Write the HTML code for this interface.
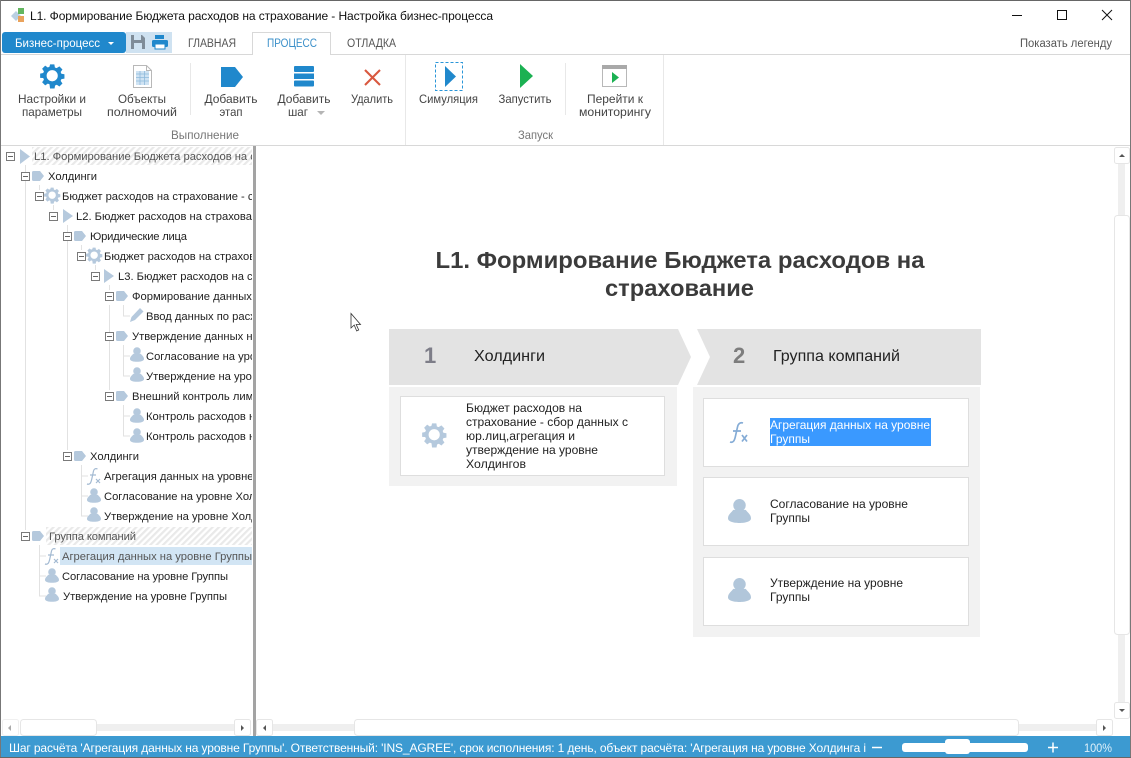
<!DOCTYPE html>
<html><head><meta charset="utf-8"><style>
html,body{margin:0;padding:0;background:#fff;width:1131px;height:758px;overflow:hidden}
svg{display:block}
text{font-family:"Liberation Sans","DejaVu Sans",sans-serif;white-space:pre}
.t{font-size:11.2px;fill:#222}
.r{font-size:12px;fill:#444;text-anchor:middle}
.c{font-size:12px;fill:#222}
</style></head><body>
<svg width="1131" height="758" viewBox="0 0 1131 758" xmlns="http://www.w3.org/2000/svg">
<defs>
<pattern id="h" width="4.500" height="4.500" patternUnits="userSpaceOnUse" patternTransform="rotate(-45)"><rect width="4.500" height="4.500" fill="#fff"/><rect width="4.500" height="2.200" fill="#e9e9e9"/></pattern>
<clipPath id="tc"><rect x="0" y="146" width="252" height="570"/></clipPath>
<symbol id="tag" viewBox="0 0 12 10" overflow="visible"><path d="M1.500 0H8L12 5 8 10H1.500Q0 10 0 8.500V1.500Q0 0 1.500 0Z"/></symbol>
<symbol id="play" viewBox="0 0 10 16" overflow="visible" preserveAspectRatio="none"><path d="M0 0 10 8 0 16Z"/></symbol>
<symbol id="gear" viewBox="0 0 24 24" overflow="visible"><path fill-rule="evenodd" d="M9.600 0h4.800l.6 3.400 1.900.8L20 2.200l3.400 3.400-2 2.900.8 1.900 3.400.6v4.800l-3.400.6-.8 1.900 2 2.900-3.400 3.400-2.900-2-1.900.8-.6 3.400H9.600L9 22.100l-1.900-.8-2.900 2-3.400-3.400 2-2.900-.8-1.900L-1.400 15v-4.800l3.400-.6.8-1.900-2-2.900L4.200 1.400l2.900 2L9 2.600Z M12 6.400a6.200 6.200 0 1 0 0 12.400 6.200 6.200 0 0 0 0-12.400Z" transform="translate(1.400 -.6) scale(.9)"/></symbol>
<symbol id="p" viewBox="0 0 14 14.600" overflow="visible"><circle cx="7" cy="3.800" r="3.800"/><path d="M0 11.800C0 9.400 2 8.300 3.200 6.600H10.800C12 8.300 14 9.400 14 11.800 14 13.800 10.500 14.600 7 14.600S0 13.800 0 11.800Z"/></symbol>
</defs>

<rect width="1131" height="758" fill="#fff"/>
<!-- title bar -->
<g>
<path d="M11 16l5-5 5 5-5 5Z" fill="#b9cfe2"/><rect x="18" y="8" width="6" height="6" fill="#63b65f"/><rect x="18" y="16" width="6" height="6" fill="#eaa35c"/>
<text x="30" y="20" font-size="12" fill="#111" textLength="463">L1. Формирование Бюджета расходов на страхование - Настройка бизнес-процесса</text>
<path d="M1012 15.500h10" stroke="#111"/><rect x="1057.500" y="10.500" width="9" height="9" fill="none" stroke="#111"/><path d="M1102 10l10 10M1112 10l-10 10" stroke="#111" fill="none"/>
</g>
<!-- tabs row -->
<rect x="126" y="32" width="46" height="21" fill="#cfe2f1"/>
<rect x="2" y="32" width="124" height="21" rx="3" fill="#2088cc"/>
<text x="15" y="47" font-size="11.500" fill="#fff" textLength="85">Бизнес-процесс</text>
<path d="M108 42h6l-3 3Z" fill="#fff"/>
<path d="M131 35h11l3 3v11h-14Z" fill="#7f8c98"/><rect x="134" y="35" width="7" height="5" fill="#cfe2f1"/><rect x="134" y="43" width="8" height="6" fill="#cfe2f1"/>
<path d="M155 35h9v4h-9Z" fill="#2088cc"/><rect x="152" y="40" width="16" height="7" rx="1.500" fill="#2088cc"/><rect x="155" y="44" width="10" height="5" fill="#fff" stroke="#2088cc"/>
<text x="188" y="47" font-size="11.500" fill="#555" textLength="48" lengthAdjust="spacingAndGlyphs">ГЛАВНАЯ</text>
<path d="M0 54.500H252.500V32.500H330.500V54.500H1131" fill="none" stroke="#d8d8d8"/>
<text x="267" y="47" font-size="11.500" fill="#3a8fc9" textLength="50" lengthAdjust="spacingAndGlyphs">ПРОЦЕСС</text>
<text x="347" y="47" font-size="11.500" fill="#555" textLength="49" lengthAdjust="spacingAndGlyphs">ОТЛАДКА</text>
<text x="1020" y="47" font-size="11.500" fill="#555" textLength="92" lengthAdjust="spacingAndGlyphs">Показать легенду</text>

<!-- ribbon icons -->
<use href="#gear" x="40" y="65" width="24" height="24" fill="#2088cc"/>
<g fill="none" stroke="#b8b8b8"><path d="M133.500 65.500h13l5 5v17h-18Z" fill="#fff"/><path d="M146.500 65.500v5h5"/></g>
<g fill="#cfe3f3"><rect x="136" y="71" width="13" height="14"/></g><g stroke="#8fbadb" stroke-width=".8"><path d="M136 74h13M136 77.500h13M136 81h13M140 71v14M144.500 71v14"/></g>
<path d="M221 67H235L243 77 235 87H221Z" fill="#2088cc"/>
<rect x="294" y="66" width="20" height="6" rx="1" fill="#2088cc"/><rect x="294" y="73.500" width="20" height="5.500" fill="#2088cc"/><rect x="294" y="80.500" width="20" height="6" rx="1" fill="#2088cc"/>
<path d="M365 70l15 15M380 70l-15 15" stroke="#d9583f" stroke-width="2.100" fill="none"/>
<rect x="435.500" y="62.500" width="27" height="28" fill="none" stroke="#2a96d8" stroke-dasharray="3 2"/>
<path d="M445 66 456 76.500 445 87Z" fill="#2088cc"/>
<path d="M520 64 533 76 520 88Z" fill="#1bb152"/>
<rect x="602.500" y="65.500" width="24" height="21" fill="#fff" stroke="#b8b8b8"/><rect x="602" y="65" width="25" height="4" fill="#a9a9a9"/><path d="M612 72 619 77.500 612 83Z" fill="#1bb152"/>

<!-- ribbon text -->
<g>
<text class="r" x="52" y="103" textLength="68" lengthAdjust="spacingAndGlyphs">Настройки и</text>
<text class="r" x="52" y="116" textLength="60" lengthAdjust="spacingAndGlyphs">параметры</text>
<text class="r" x="142" y="103" textLength="48" lengthAdjust="spacingAndGlyphs">Объекты</text>
<text class="r" x="142" y="116" textLength="70" lengthAdjust="spacingAndGlyphs">полномочий</text>
<text class="r" x="231" y="103" textLength="53" lengthAdjust="spacingAndGlyphs">Добавить</text>
<text class="r" x="231" y="116" textLength="23" lengthAdjust="spacingAndGlyphs">этап</text>
<text class="r" x="304" y="103" textLength="53" lengthAdjust="spacingAndGlyphs">Добавить</text>
<text class="r" x="298" y="116" textLength="20" lengthAdjust="spacingAndGlyphs">шаг</text>
<text class="r" x="372" y="103" textLength="42" lengthAdjust="spacingAndGlyphs">Удалить</text>
<text class="r" x="448.500" y="103" textLength="59" lengthAdjust="spacingAndGlyphs">Симуляция</text>
<text class="r" x="525" y="103" textLength="53" lengthAdjust="spacingAndGlyphs">Запустить</text>
<text class="r" x="615" y="103" textLength="56" lengthAdjust="spacingAndGlyphs">Перейти к</text>
<text class="r" x="615" y="116" textLength="72" lengthAdjust="spacingAndGlyphs">мониторингу</text>
<text class="r" x="205" y="139" textLength="68" lengthAdjust="spacingAndGlyphs" style="fill:#777">Выполнение</text>
<text class="r" x="535.500" y="139" textLength="35" lengthAdjust="spacingAndGlyphs" style="fill:#777">Запуск</text>
</g>
<path d="M317 111h8l-4 4Z" fill="#b5b5b5"/>
<g stroke="#e8e8e8"><path d="M190.500 63V115M405.500 55V145M565.500 63V115M663.500 55V145"/></g>
<path d="M0 145.500H1131" stroke="#d8d8d8"/>

<!-- tree -->
<g clip-path="url(#tc)">
<rect x="32" y="147" width="221" height="18" fill="url(#h)"/>
<rect x="46" y="527" width="207" height="18" fill="url(#h)"/>
<rect x="60" y="547" width="193" height="18" fill="#d2e5f4"/>
<g stroke="#e2e2e2" fill="none">
<path d="M25.500 165V530M39.500 185V190M67.500 225V450M53.500 205V210M81.500 245V250M95.500 265V270M109.500 285V290M123.500 305V316H130M123.500 345V376H130M123.500 405V436H130M109.500 305V390M81.500 465V516H88M39.500 545V596H46M123.500 356H130M123.500 416H130M81.500 476H88M81.500 496H88M39.500 556H46M39.500 576H46"/>
</g>
<!-- expanders -->
<g fill="#fff" stroke="#7a7a7a">
<rect x="6.500" y="152.500" width="8" height="8"/><rect x="21.500" y="172.500" width="8" height="8"/><rect x="35.500" y="192.500" width="8" height="8"/><rect x="49.500" y="212.500" width="8" height="8"/><rect x="63.500" y="232.500" width="8" height="8"/><rect x="77.500" y="252.500" width="8" height="8"/><rect x="91.500" y="272.500" width="8" height="8"/><rect x="105.500" y="292.500" width="8" height="8"/><rect x="105.500" y="332.500" width="8" height="8"/><rect x="105.500" y="392.500" width="8" height="8"/><rect x="63.500" y="452.500" width="8" height="8"/><rect x="21.500" y="532.500" width="8" height="8"/>
</g>
<path d="M8 156.500h5M23 176.500h5M37 196.500h5M51 216.500h5M65 236.500h5M79 256.500h5M93 276.500h5M107 296.500h5M107 336.500h5M107 396.500h5M65 456.500h5M23 536.500h5" stroke="#666"/>
<!-- icons -->
<g fill="#b5c9dd">
<use href="#play" x="20" y="149" width="10" height="15"/>
<use href="#play" x="63" y="209" width="10" height="14"/>
<use href="#play" x="104" y="269" width="10" height="14"/>
<use href="#tag" x="32" y="171" width="12" height="10"/>
<use href="#tag" x="74" y="231" width="12" height="10"/>
<use href="#tag" x="116" y="291" width="12" height="10"/>
<use href="#tag" x="116" y="331" width="12" height="10"/>
<use href="#tag" x="116" y="391" width="12" height="10"/>
<use href="#tag" x="74" y="451" width="12" height="10"/>
<use href="#tag" x="32" y="531" width="12" height="10"/>
<use href="#gear" x="44" y="188" width="16" height="16"/>
<use href="#gear" x="86" y="248" width="16" height="16"/>
<path d="M130 322l1.500-5L140 308l3.500 3.500L135 320Z"/>
<use href="#p" x="130" y="347" width="14" height="15"/>
<use href="#p" x="130" y="367" width="14" height="15"/>
<use href="#p" x="130" y="408" width="14" height="15"/>
<use href="#p" x="130" y="428" width="14" height="15"/>
<use href="#p" x="87" y="488" width="14" height="15"/>
<use href="#p" x="87" y="507" width="14" height="15"/>
<use href="#p" x="45" y="568" width="14" height="15"/>
<use href="#p" x="45" y="587" width="14" height="15"/>
</g>
<g fill="none" stroke="#a3bad2" stroke-width="1.200">
<path d="M87 484c3 1 4-1 5-6l1.500-7c.5-2 2-3 4-2M90 475h6M96 479l4 4M100 479l-4 4"/>
<path d="M45 564c3 1 4-1 5-6l1.500-7c.5-2 2-3 4-2M48 555h6M54 559l4 4M58 559l-4 4"/>
</g>
<!-- labels -->
<g class="t">
<text class="t" x="34" y="160" style="fill:#555">L1. Формирование Бюджета расходов на страхование</text>
<text class="t" x="48" y="180" textLength="49">Холдинги</text>
<text class="t" x="62" y="200">Бюджет расходов на страхование - сбор данных</text>
<text class="t" x="76" y="220">L2. Бюджет расходов на страхование</text>
<text class="t" x="90" y="240" textLength="97">Юридические лица</text>
<text class="t" x="104" y="260">Бюджет расходов на страхование - сбор</text>
<text class="t" x="118" y="280">L3. Бюджет расходов на страхование</text>
<text class="t" x="132" y="300">Формирование данных по расходам</text>
<text class="t" x="146" y="320">Ввод данных по расходам на страхование</text>
<text class="t" x="132" y="340">Утверждение данных на уровне</text>
<text class="t" x="146" y="360">Согласование на уровне Юр.лица</text>
<text class="t" x="146" y="380">Утверждение на уровне Юр.лица</text>
<text class="t" x="132" y="400">Внешний контроль лимитов расходов</text>
<text class="t" x="146" y="420">Контроль расходов на уровне</text>
<text class="t" x="146" y="440">Контроль расходов на уровне</text>
<text class="t" x="90" y="460" textLength="49">Холдинги</text>
<text class="t" x="104" y="480">Агрегация данных на уровне Холдинга</text>
<text class="t" x="104" y="500">Согласование на уровне Холдинга</text>
<text class="t" x="104" y="520">Утверждение на уровне Холдинга</text>
<text class="t" x="49" y="540" textLength="87" style="fill:#555">Группа компаний</text>
<text class="t" x="62" y="560" textLength="190" style="fill:#555">Агрегация данных на уровне Группы</text>
<text class="t" x="62" y="580" textLength="166">Согласование на уровне Группы</text>
<text class="t" x="63" y="600" textLength="164">Утверждение на уровне Группы</text>
</g>
</g>
<rect x="253" y="146" width="3" height="590" fill="#a3a3a3"/>

<!-- main diagram -->
<text x="680" y="268" text-anchor="middle" font-size="23" font-weight="700" fill="#3b3b3b" textLength="489" lengthAdjust="spacingAndGlyphs">L1. Формирование Бюджета расходов на</text>
<text x="679.500" y="296" text-anchor="middle" font-size="23" font-weight="700" fill="#3b3b3b" textLength="149" lengthAdjust="spacingAndGlyphs">страхование</text>
<path d="M389 329H678L691 357 678 385H389Z" fill="#e3e3e3"/>
<path d="M697 329H981V385H697L710 357Z" fill="#e3e3e3"/>
<text x="424" y="363" font-size="22" font-weight="700" fill="#7d7d88" textLength="12">1</text>
<text x="733" y="363" font-size="22" font-weight="700" fill="#7d7d7d" textLength="13">2</text>
<text x="474" y="361" font-size="16" fill="#222" textLength="71" lengthAdjust="spacingAndGlyphs">Холдинги</text>
<text x="773" y="361" font-size="16" fill="#222" textLength="127" lengthAdjust="spacingAndGlyphs">Группа компаний</text>
<rect x="389" y="387" width="288" height="99" fill="#f2f2f2"/>
<rect x="400.500" y="396.500" width="264" height="79" fill="#fff" stroke="#dedede"/>
<rect x="693" y="387" width="287" height="250" fill="#f2f2f2"/>
<rect x="703.500" y="398.500" width="265" height="68" fill="#fff" stroke="#dedede"/>
<rect x="703.500" y="477.500" width="265" height="68" fill="#fff" stroke="#dedede"/>
<rect x="703.500" y="557.500" width="265" height="68" fill="#fff" stroke="#dedede"/>
<use href="#gear" x="422" y="424" width="24" height="24" fill="#b5c9dd"/>
<g class="c">
<text class="c" x="466" y="412" textLength="116" lengthAdjust="spacingAndGlyphs">Бюджет расходов на</text>
<text class="c" x="466" y="426" textLength="162" lengthAdjust="spacingAndGlyphs">страхование - сбор данных с</text>
<text class="c" x="466" y="440" textLength="109" lengthAdjust="spacingAndGlyphs">юр.лиц,агрегация и</text>
<text class="c" x="466" y="454" textLength="132" lengthAdjust="spacingAndGlyphs">утверждение на уровне</text>
<text class="c" x="466" y="468" textLength="60" lengthAdjust="spacingAndGlyphs">Холдингов</text>
</g>
<rect x="770" y="418" width="161" height="28" fill="#3a99ff"/>
<text class="c" x="770" y="429" textLength="160" lengthAdjust="spacingAndGlyphs" style="fill:#fff">Агрегация данных на уровне</text>
<text class="c" x="770" y="443" textLength="40" lengthAdjust="spacingAndGlyphs" style="fill:#fff">Группы</text>
<text class="c" x="770" y="508" textLength="138" lengthAdjust="spacingAndGlyphs">Согласование на уровне</text>
<text class="c" x="770" y="522" textLength="40" lengthAdjust="spacingAndGlyphs">Группы</text>
<text class="c" x="770" y="587" textLength="133" lengthAdjust="spacingAndGlyphs">Утверждение на уровне</text>
<text class="c" x="770" y="601" textLength="40" lengthAdjust="spacingAndGlyphs">Группы</text>
<g fill="none" stroke="#85acd6" stroke-width="1.700">
<path d="M730 442c3 1 4.500-1 5.500-6l2-9c.6-3 2.500-5 5.500-4M733 431h8M742 435l5 6.500M747 435l-5 6.500"/>
</g>
<g fill="#b1c6da">
<use href="#p" x="728" y="499" width="23" height="24"/>
<use href="#p" x="728" y="578" width="23" height="24"/>
</g>
<!-- cursor -->
<path d="M351 313.500V328l3.200-3 2.500 6 2-1-2.500-5.500h4.300Z" fill="#fff" stroke="#333" stroke-width=".8"/>

<!-- scrollbars -->
<g fill="#efefef">
<rect x="96" y="724" width="140" height="7"/>
<rect x="272" y="724" width="824" height="7"/>
<rect x="1118" y="163" width="7" height="540"/>
</g>
<g fill="#fff" stroke="#e6e6e6">
<rect x="2.500" y="719.500" width="16" height="16" rx="2" stroke="#f0f0f0"/>
<rect x="20.500" y="719.500" width="76" height="16" rx="3"/>
<rect x="234.500" y="719.500" width="16" height="16" rx="2"/>
<rect x="256.500" y="719.500" width="16" height="16" rx="2"/>
<rect x="354.500" y="719.500" width="664" height="16" rx="3"/>
<rect x="1096.500" y="719.500" width="16" height="16" rx="2"/>
<rect x="1114.500" y="147.500" width="15" height="16" rx="2"/>
<rect x="1114.500" y="215.500" width="15" height="419" rx="3"/>
<rect x="1114.500" y="702.500" width="15" height="16" rx="2"/>
</g>
<g fill="#555">
<path d="M11 725v6l-3-3Z" fill="#aaa"/><path d="M241 725v6l3-3Z"/><path d="M266 725v6l-3-3Z"/><path d="M1103 725v6l3-3Z"/>
<path d="M1119 157h6l-3-3Z"/><path d="M1119 709h6l-3 3Z"/>
</g>

<!-- status bar -->
<rect x="0" y="736" width="1131" height="22" fill="#3c9ad1"/>
<text x="9" y="752" font-size="12" fill="#fff" textLength="857">Шаг расчёта 'Агрегация данных на уровне Группы'. Ответственный: 'INS_AGREE', срок исполнения: 1 день, объект расчёта: 'Агрегация на уровне Холдинга і</text>
<path d="M872 747.500h10" stroke="#fff" stroke-width="1.500"/>
<rect x="902" y="743" width="126" height="9" rx="3" fill="#fff"/>
<rect x="945" y="739" width="25" height="15" rx="3" fill="#fff"/>
<path d="M1048 747.500h10M1053 742.500v10" stroke="#fff" stroke-width="1.500"/>
<text x="1084" y="752" font-size="12" fill="#dff0fa" textLength="28" lengthAdjust="spacingAndGlyphs">100%</text>

<!-- window border -->
<rect x="0" y="0" width="1131" height="1" fill="#666"/>
<rect x="0" y="0" width="1" height="758" fill="#777"/>
<rect x="1130" y="0" width="1" height="758" fill="#777"/>
<rect x="0" y="757" width="1131" height="1" fill="#666"/>
</svg>
</body></html>
